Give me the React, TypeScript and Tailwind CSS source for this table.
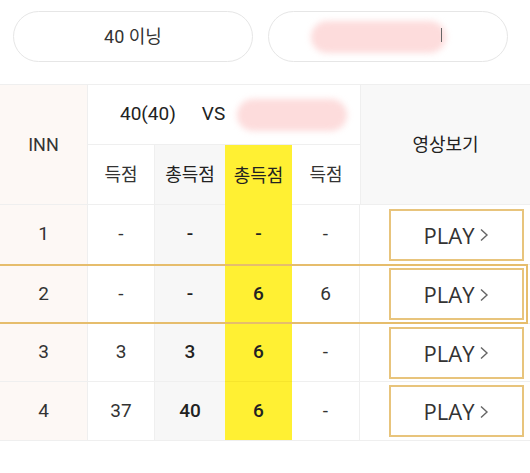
import React from "react";

const font = { fontFamily: "Roboto, 'Noto Sans CJK KR', 'Noto Sans', sans-serif" };
const cols = "grid grid-cols-[88px_67px_70px_67px_68px_170px]";

function Chevron() {
  return (
    <svg width="10" height="14" viewBox="0 0 10 14" className="ml-[5px] mt-[1px]">
      <polyline points="2,1.5 8,7 2,12.5" fill="none" stroke="#666" strokeWidth="1.4" />
    </svg>
  );
}

function Play() {
  return (
    <div className="ml-[29px] mr-[6px] h-[52px] border-2 border-[#e8c47c] bg-white flex items-center justify-center">
      <span className="text-[22px] text-[#333] leading-none" style={{ fontFamily: "'Open Sans', sans-serif" }}>PLAY</span>
      <Chevron />
    </div>
  );
}

const rows = [
  { inn: "1", a: "-", b: "-", c: "-", d: "-", h: "h-[60px]" },
  { inn: "2", a: "-", b: "-", c: "6", d: "6", h: "h-[59px]", hi: true },
  { inn: "3", a: "3", b: "3", c: "6", d: "-", h: "h-[58px]" },
  { inn: "4", a: "37", b: "40", c: "6", d: "-", h: "h-[59px]" },
];

export default function App() {
  return (
    <div className="w-[530px] h-[473px] bg-white text-[#333] overflow-hidden" style={font}>
      <div className="flex gap-[15px] pl-[13px] pt-[11px]">
        <div className="w-[240px] h-[51px] rounded-full border border-[#e6e6e6] flex items-center justify-center text-[18px] text-[#333]">
          40 이닝
        </div>
        <div className="relative w-[240px] h-[51px] rounded-full border border-[#e6e6e6] flex items-center justify-center">
          <div className="absolute left-[42px] top-[9px] w-[135px] h-[32px] rounded-full bg-[#fddcdc] blur-[3px]" />
          <div className="absolute left-[172px] top-[16px] w-[1px] h-[14px] bg-[#666]" />
        </div>
      </div>

      <div className="mt-[22px] border-t border-[#efefef]">
        <div className={`${cols} grid-rows-[60px_60px]`}>
          <div className="row-span-2 bg-[#fdf8f5] border-r border-b border-[#efefef] flex items-center justify-center text-[18px]">INN</div>
          <div className="col-span-4 border-b border-[#efefef] flex items-center pl-[32px] text-[19px] text-[#222]">
            <span>40(40)</span>
            <span className="ml-[26px]">VS</span>
            <div className="ml-[12px] w-[110px] h-[32px] rounded-full bg-[#fddcdc] blur-[3px]" />
          </div>
          <div className="row-span-2 bg-[#f8f8f8] border-l border-b border-[#efefef] flex items-center justify-center text-[18px] text-[#222]">영상보기</div>
          <div className="border-r border-b border-[#efefef] flex items-center justify-center text-[18px]">득점</div>
          <div className="bg-[#f7f7f7] border-b border-[#efefef] flex items-center justify-center text-[18px] text-[#222]">총득점</div>
          <div className="bg-[#fff033] flex items-center justify-center text-[18px] text-[#222]">총득점</div>
          <div className="border-b border-[#efefef] flex items-center justify-center text-[18px]">득점</div>
        </div>

        {rows.map((r, i) => (
          <div key={i} className={`relative ${cols} ${r.h} ${i < 3 ? "" : "border-b border-[#efefef]"}`}>
            <div className={`bg-[#fdf8f5] border-r border-[#efefef] flex items-center justify-center text-[19px] ${i < 3 ? "border-b" : ""}`}>{r.inn}</div>
            <div className={`border-r border-[#efefef] flex items-center justify-center text-[19px] ${i < 3 ? "border-b" : ""}`}>{r.a}</div>
            <div className={`bg-[#f7f7f7] border-[#efefef] flex items-center justify-center text-[19px] font-medium text-[#222] ${i < 3 ? "border-b" : ""}`}>{r.b}</div>
            <div className={`bg-[#fff033] flex items-center justify-center text-[19px] font-medium text-[#222] ${i < 3 ? "border-b border-[#f6e52c]" : ""}`}>{r.c}</div>
            <div className={`border-r border-[#efefef] flex items-center justify-center text-[19px] ${i < 3 ? "border-b" : ""}`}>{r.d}</div>
            <div className={`flex flex-col justify-center border-[#efefef] ${i < 3 ? "border-b" : ""}`}>
              <Play />
            </div>
            {r.hi && (
              <div className="absolute -top-[1px] bottom-0 left-[-2px] right-[2px] border-2 border-[#e6bd6c] pointer-events-none" />
            )}
          </div>
        ))}
      </div>
    </div>
  );
}
